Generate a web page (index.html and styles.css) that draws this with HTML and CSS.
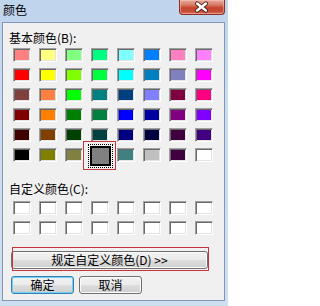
FILE: index.html
```html
<!DOCTYPE html>
<html lang="zh-CN">
<head>
<meta charset="utf-8">
<title>颜色</title>
<link rel="stylesheet" href="styles.css">
</head>
<body>
<div class="window">
  <div class="titlebar">
    <span class="title">颜色</span>
    <div class="close">
      <svg width="46" height="15" viewBox="0 0 46 15">
        <path d="M18.5 3.5 L27.5 10.5 M27.5 3.5 L18.5 10.5" stroke="#4a1e18" stroke-width="4.4" stroke-linecap="round" fill="none"/>
        <path d="M18.5 3.5 L27.5 10.5 M27.5 3.5 L18.5 10.5" stroke="#ffffff" stroke-width="2.6" stroke-linecap="round" fill="none"/>
      </svg>
    </div>
  </div>
  <div class="client">
    <div class="label label-basic">基本颜色(B):</div>
    <div class="grid basic">
      <span class="cell" style="background:#ff8080"></span>
      <span class="cell" style="background:#ffff80"></span>
      <span class="cell" style="background:#80ff80"></span>
      <span class="cell" style="background:#00ff80"></span>
      <span class="cell" style="background:#80ffff"></span>
      <span class="cell" style="background:#0080ff"></span>
      <span class="cell" style="background:#ff80c0"></span>
      <span class="cell" style="background:#ff80ff"></span>

      <span class="cell" style="background:#ff0000"></span>
      <span class="cell" style="background:#ffff00"></span>
      <span class="cell" style="background:#80ff00"></span>
      <span class="cell" style="background:#00ff40"></span>
      <span class="cell" style="background:#00ffff"></span>
      <span class="cell" style="background:#0080c0"></span>
      <span class="cell" style="background:#8080c0"></span>
      <span class="cell" style="background:#ff00ff"></span>

      <span class="cell" style="background:#804040"></span>
      <span class="cell" style="background:#ff8040"></span>
      <span class="cell" style="background:#00ff00"></span>
      <span class="cell" style="background:#008080"></span>
      <span class="cell" style="background:#004080"></span>
      <span class="cell" style="background:#8080ff"></span>
      <span class="cell" style="background:#800040"></span>
      <span class="cell" style="background:#ff0080"></span>

      <span class="cell" style="background:#800000"></span>
      <span class="cell" style="background:#ff8000"></span>
      <span class="cell" style="background:#008000"></span>
      <span class="cell" style="background:#008040"></span>
      <span class="cell" style="background:#0000ff"></span>
      <span class="cell" style="background:#0000a0"></span>
      <span class="cell" style="background:#800080"></span>
      <span class="cell" style="background:#8000ff"></span>

      <span class="cell" style="background:#400000"></span>
      <span class="cell" style="background:#804000"></span>
      <span class="cell" style="background:#004000"></span>
      <span class="cell" style="background:#004040"></span>
      <span class="cell" style="background:#000080"></span>
      <span class="cell" style="background:#000040"></span>
      <span class="cell" style="background:#400040"></span>
      <span class="cell" style="background:#400080"></span>

      <span class="cell" style="background:#000000"></span>
      <span class="cell" style="background:#808000"></span>
      <span class="cell" style="background:#808040"></span>
      <span class="cell selected" style="background:#808080"></span>
      <span class="cell" style="background:#408080"></span>
      <span class="cell" style="background:#c0c0c0"></span>
      <span class="cell" style="background:#400040"></span>
      <span class="cell" style="background:#ffffff"></span>
    </div>
    <div class="label label-custom">自定义颜色(C):</div>
    <div class="grid custom">
      <span class="cell empty"></span><span class="cell empty"></span><span class="cell empty"></span><span class="cell empty"></span>
      <span class="cell empty"></span><span class="cell empty"></span><span class="cell empty"></span><span class="cell empty"></span>
      <span class="cell empty"></span><span class="cell empty"></span><span class="cell empty"></span><span class="cell empty"></span>
      <span class="cell empty"></span><span class="cell empty"></span><span class="cell empty"></span><span class="cell empty"></span>
    </div>
    <button class="btn btn-define">规定自定义颜色(D) &gt;&gt;</button>
    <div class="actions">
      <button class="btn btn-default">确定</button>
      <button class="btn">取消</button>
    </div>
  </div>
</div>
</body>
</html>
```

FILE: styles.css
```css
html, body {
  margin: 0;
  padding: 0;
}
body {
  width: 228px;
  height: 306px;
  overflow: hidden;
  font-family: "Noto Sans CJK SC", "Liberation Sans", sans-serif;
  font-size: 12px;
  color: #000;
}
.window {
  width: 228px;
  height: 306px;
  box-sizing: border-box;
  padding: 0 3px 5px 2px;
  background: linear-gradient(180deg, #bfd4ed 0%, #c9dbf0 30%, #cfdff2 100%);
  display: flex;
  flex-direction: column;
}
.titlebar {
  height: 22px;
  display: flex;
  justify-content: space-between;
  align-items: flex-start;
  flex: none;
}
.title {
  margin-left: 1px;
  margin-top: 3px;
  line-height: 14px;
  font-size: 12px;
}
.close {
  width: 46px;
  height: 15px;
  box-sizing: border-box;
  border: 1px solid #8c2d22;
  border-top: none;
  border-radius: 0 0 4px 4px;
  background: linear-gradient(180deg, #e9aa9c 0%, #d77c68 35%, #c7462f 55%, #c44a33 80%, #d9715a 100%);
  box-shadow: inset 0 0 0 1px rgba(255, 210, 200, 0.45);
  display: flex;
  align-items: center;
  justify-content: center;
}
.close svg {
  display: block;
  margin-left: -1px;
}
.client {
  flex: 1;
  border: 1px solid #8497b2;
  background: #f0f0f0;
  display: flex;
  flex-direction: column;
}
.label {
  line-height: 14px;
  height: 14px;
  padding-left: 6px;
  white-space: nowrap;
}
.label-basic {
  margin-top: 8px;
}
.label-custom {
  margin-top: 20px;
}
.grid {
  display: grid;
  grid-template-columns: repeat(8, 18px);
  grid-auto-rows: 14px;
  column-gap: 8px;
  row-gap: 6px;
  padding-left: 10px;
}
.basic {
  margin-top: 3px;
}
.custom {
  margin-top: 5px;
}
.cell {
  display: block;
  box-sizing: border-box;
  width: 18px;
  height: 14px;
  border-style: solid;
  border-width: 1px;
  border-color: #a0a0a0 #ffffff #ffffff #a0a0a0;
  box-shadow: inset 1px 1px 0 #696969, inset -1px -1px 0 #e3e3e3;
}
.cell.empty {
  background: #ffffff;
}
.cell.selected {
  position: relative;
  border: none;
  width: 17px;
  height: 16px;
  margin-left: 1px;
  box-shadow: 0 0 0 2px #000000;
}
.cell.selected::before {
  content: "";
  position: absolute;
  left: -4px;
  top: -4px;
  right: -4px;
  bottom: -4px;
  border: 1px dotted #000;
}
.cell.selected::after {
  content: "";
  position: absolute;
  left: -9px;
  top: -7px;
  right: -7px;
  bottom: -6px;
  border: 1px solid #c8363c;
}
.btn {
  font-family: "Noto Sans CJK SC", "Liberation Sans", sans-serif;
  font-size: 12px;
  line-height: 14px;
  color: #000;
  height: 18px;
  padding: 0;
  box-sizing: border-box;
  border: 1px solid #707070;
  border-radius: 3px;
  background: linear-gradient(180deg, #f2f2f2 0%, #ebebeb 48%, #dddddd 52%, #cfcfcf 100%);
  box-shadow: inset 0 0 0 1px #fbfbfb;
}
.btn-define {
  position: relative;
  margin: 16px 0 0 8px;
  width: 197px;
}
.btn-define::after {
  content: "";
  position: absolute;
  left: 0;
  top: -5px;
  right: -2px;
  bottom: -3px;
  border: 1px solid #c8363c;
}
.actions {
  display: flex;
  gap: 5px;
  margin: 7px 0 0 8px;
}
.actions .btn {
  width: 63px;
}
.btn-default {
  border-color: #3c7fb1;
  box-shadow: inset 0 0 0 1px #6fd0f7;
}
```
